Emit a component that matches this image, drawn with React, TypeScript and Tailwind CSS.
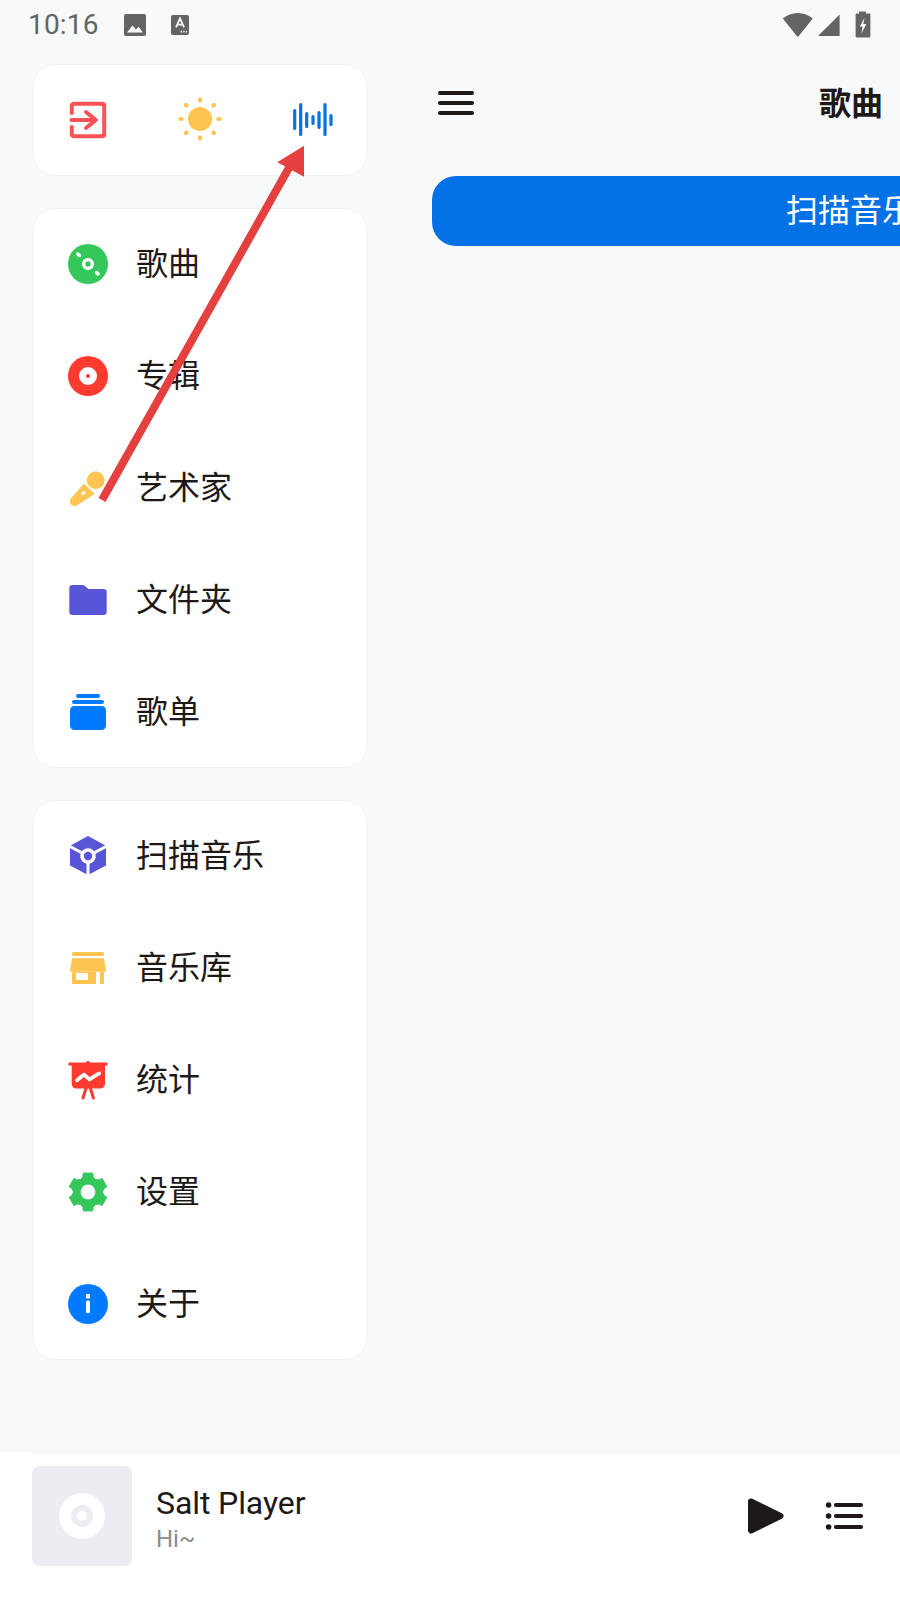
import React from "react";

const gearPoints = (() => {
  const pts: string[] = [];
  for (let i = 0; i < 6; i++) {
    const a = -90 + 60 * i;
    for (const [r, d] of [[14.6, -30], [15.8, -19], [19.5, -14], [19.5, 14], [15.8, 19]] as const) {
      const t = ((a + d) * Math.PI) / 180;
      pts.push(`${(20 + r * Math.cos(t)).toFixed(2)},${(20 + r * Math.sin(t)).toFixed(2)}`);
    }
  }
  return pts.join(" ");
})();

const Disc = () => (
  <svg width="40" height="40" viewBox="0 0 40 40">
    <circle cx="20" cy="20" r="20" fill="#34c759" />
    <circle cx="20" cy="20" r="4.4" fill="none" stroke="#fff" strokeWidth="3.4" />
    <path d="M9.9 9.9 11.4 11.4M28.6 28.6 30.1 30.1" stroke="#fff" strokeWidth="3.6" strokeLinecap="round" />
  </svg>
);
const Album = () => (
  <svg width="40" height="40" viewBox="0 0 40 40">
    <circle cx="20" cy="20" r="20" fill="#ff3b30" />
    <circle cx="20" cy="20" r="9" fill="#fff" />
    <circle cx="20" cy="20" r="2" fill="#ff3b30" />
  </svg>
);
const Mic = () => (
  <svg width="40" height="40" viewBox="0 0 40 40">
    <circle cx="27.7" cy="12.2" r="8.9" fill="#ffc552" />
    <path d="M15.8 15.6 26.6 26 8.6 37.6C6.8 38.7 5 38.4 3.4 36.8 1.6 35 1.2 33 2.4 31.2Z" fill="#ffc552" />
    <ellipse cx="15.4" cy="25.2" rx="2.4" ry="1.5" transform="rotate(-42 15.4 25.2)" fill="#fff" />
  </svg>
);
const Folder = () => (
  <svg width="40" height="40" viewBox="0 0 40 40">
    <path d="M4.3 5H14C15.5 5 16.5 5.5 17.5 6.4L20.5 9H35.7C37.4 9 38.7 10.3 38.7 12V32C38.7 33.7 37.4 35 35.7 35H4.3C2.6 35 1.3 33.7 1.3 32V8C1.3 6.3 2.6 5 4.3 5Z" fill="#5856d6" />
  </svg>
);
const Stack = () => (
  <svg width="40" height="40" viewBox="0 0 40 40" fill="#007aff">
    <rect x="8" y="2" width="24" height="4" rx="2" />
    <rect x="4" y="8" width="32" height="4" rx="2" />
    <rect x="2" y="14" width="36" height="24" rx="4.5" />
  </svg>
);
const Cube = () => (
  <svg width="40" height="40" viewBox="0 0 40 40">
    <path d="M20 0 38 9.8V29.4L20 39 2 29.4V9.8Z" fill="#5856d6" strokeLinejoin="round" />
    <path d="M1 10 20 20 39 10M20 20V40" stroke="#fff" strokeWidth="3" fill="none" />
    <circle cx="20" cy="20" r="6" fill="#5856d6" stroke="#fff" strokeWidth="3.6" />
  </svg>
);
const Shop = () => (
  <svg width="40" height="40" viewBox="0 0 40 40" fill="#ffc552">
    <rect x="4" y="4" width="32" height="4" rx="1.5" />
    <path d="M5 10.3H35C35.6 10.3 36 10.6 36.1 11.2L38 22C38.2 23 37.6 23.7 36.8 23.7H3.2C2.4 23.7 1.8 23 2 22L3.9 11.2C4 10.6 4.4 10.3 5 10.3Z" />
    <path d="M4 23.7H28V35C28 35.6 27.6 36 27 36H5C4.4 36 4 35.6 4 35Z" />
    <rect x="8" y="25" width="12" height="7" fill="#fff" />
    <path d="M32 23.7H36V35C36 35.6 35.6 36 35 36H33C32.4 36 32 35.6 32 35Z" />
  </svg>
);
const Stats = () => (
  <svg width="40" height="40" viewBox="0 0 40 40" fill="#ff3b30">
    <circle cx="20" cy="2.4" r="1.6" />
    <rect x="0.3" y="2.6" width="39.4" height="3" rx="1.4" />
    <path d="M3.7 4H37V24C37 26.2 35.2 28.4 33 28.4H7.7C5.5 28.4 3.7 26.2 3.7 24Z" />
    <path d="M18 28 15 38M22.4 28 25.4 38" stroke="#ff3b30" strokeWidth="3" strokeLinecap="round" />
    <path d="M9 20.2 16 14.6 21.4 19.4 31.2 13.4" fill="none" stroke="#fff" strokeWidth="3.8" strokeLinecap="round" strokeLinejoin="round" />
  </svg>
);
const Gear = () => (
  <svg width="40" height="40" viewBox="0 0 40 40">
    <polygon points={gearPoints} fill="#34c759" stroke="#34c759" strokeWidth="1" strokeLinejoin="round" />
    <circle cx="20" cy="20" r="7.4" fill="#fff" />
  </svg>
);
const Info = () => (
  <svg width="40" height="40" viewBox="0 0 40 40">
    <circle cx="20" cy="20" r="20" fill="#007aff" />
    <rect x="18" y="10" width="4" height="4.4" rx="1" fill="#fff" />
    <rect x="18" y="16.6" width="4" height="12.6" rx="1.6" fill="#fff" />
  </svg>
);

const Exit = () => (
  <svg width="40" height="40" viewBox="0 0 40 40" fill="none" stroke="#ff5252" strokeWidth="4" strokeLinecap="round" strokeLinejoin="round">
    <path d="M3.8 13V5.8C3.8 4.7 4.7 3.8 5.8 3.8H34.2C35.3 3.8 36.2 4.7 36.2 5.8V34.2C36.2 35.3 35.3 36.2 34.2 36.2H5.8C4.7 36.2 3.8 35.3 3.8 34.2V27" />
    <path d="M3.6 20H27.6M18 12 27.8 20 18 28" />
  </svg>
);
const Sun = () => (
  <svg width="48" height="48" viewBox="0 0 48 48" fill="#ffc552" stroke="#ffc552">
    <circle cx="24" cy="24" r="12" stroke="none" />
    <path d="M24 4.4V5.6M24 42.4V43.6M4.4 24H5.6M42.4 24H43.6M10 10 10.6 10.6M38 10 37.4 10.6M10 38 10.6 37.4M38 38 37.4 37.4" strokeWidth="4.2" strokeLinecap="round" />
  </svg>
);
const Wave = () => (
  <svg width="40" height="40" viewBox="0 0 40 40" stroke="#0471e6" strokeWidth="3.2" strokeLinecap="round">
    <path d="M1.7 10.5V28.5M7.7 4.5V34.5M13.7 13.5V26.5M20 16.5V23.5M26 12.5V27.5M32 4.5V34.5M38 15.5V24.5" />
  </svg>
);

const ImageIcon = () => (
  <svg width="24" height="24" viewBox="0 0 24 24">
    <rect x="1" y="1" width="22" height="22" rx="2" fill="#636564" />
    <path d="M4 19.4 9.5 12.6 13 16.4 15.6 13.8 20 19.4Z" fill="#f8f9fb" />
  </svg>
);
const FontIcon = () => (
  <svg width="20" height="22" viewBox="0 0 20 22">
    <rect x="1" y="1" width="18" height="20" rx="2" fill="#636564" />
    <path d="M6 13.4 10 4.4 14 13.4M7.4 10.6H12.6" stroke="#f8f9fb" strokeWidth="1.8" fill="none" />
    <path d="M10.6 17.6h1.4M13.2 17.6h1.4M15.8 17.6h1.4" stroke="#f8f9fb" strokeWidth="1.6" />
  </svg>
);

const navA = [
  { label: "歌曲", Icon: Disc },
  { label: "专辑", Icon: Album },
  { label: "艺术家", Icon: Mic },
  { label: "文件夹", Icon: Folder },
  { label: "歌单", Icon: Stack },
];
const navB = [
  { label: "扫描音乐", Icon: Cube },
  { label: "音乐库", Icon: Shop },
  { label: "统计", Icon: Stats },
  { label: "设置", Icon: Gear },
  { label: "关于", Icon: Info },
];

const NavCard = ({ items }: { items: { label: string; Icon: () => React.ReactElement }[] }) => (
  <div className="rounded-[24px] bg-white ring-1 ring-inset ring-[#eef0f2]">
    {items.map(({ label, Icon }) => (
      <div key={label} className="flex h-[112px] items-center gap-[28px] pl-[36px] text-[32px] leading-none">
        <Icon />
        <span>{label}</span>
      </div>
    ))}
  </div>
);

export default function App() {
  return (
    <div className="relative flex h-[1600px] w-[900px] flex-col overflow-hidden bg-[#f8f9fb] font-['Roboto','Noto_Sans_CJK_SC',sans-serif] text-[#1e1817]">
      <div className="flex h-[64px] flex-none items-center justify-between pb-[14px] pl-[28px] pr-[29px]">
        <div className="flex items-center text-[#636564]">
          <span className="w-[95px] text-[28px] leading-none tracking-[0.2px]">10:16</span>
          <ImageIcon />
          <span className="w-[23px]" />
          <FontIcon />
        </div>
        <div className="mb-[2px] flex items-center">
          <svg width="32" height="26" viewBox="0 0 32 26" fill="#636564">
            <path d="M0.8 7.6C4.8 4.2 10 2 15.8 2 21.6 2 26.8 4.2 30.8 7.6L16.6 25.2C16.2 25.8 15.4 25.8 15 25.2Z" />
          </svg>
          <svg className="ml-[3px]" width="24" height="26" viewBox="0 0 24 26" fill="#636564">
            <path d="M1 25 22.6 3.6V25Z" />
          </svg>
          <svg className="ml-[14px]" width="16" height="28" viewBox="0 0 16 28" fill="#636564">
            <path d="M4 1.5H11V3.5H14.6C15 3.5 15.4 3.9 15.4 4.4V26.6C15.4 27 15 27.4 14.6 27.4H1.4C1 27.4 0.6 27 0.6 26.6V4.4C0.6 3.9 1 3.5 1.4 3.5H4Z" />
            <path d="M9.4 8 4.8 16.6H7.6L6.4 23.6 11.4 14H8.4Z" fill="#f8f9fb" />
          </svg>
        </div>
      </div>

      <div className="flex min-h-0 flex-1">
        <div className="ml-[32px] flex w-[336px] flex-none flex-col gap-[32px]">
          <div className="grid h-[112px] grid-cols-3 rounded-[24px] bg-white ring-1 ring-inset ring-[#eef0f2]">
            <div className="flex items-center justify-center pr-[1px]"><Exit /></div>
            <div className="flex items-center justify-center pb-[2px]"><Sun /></div>
            <div className="flex items-center justify-center pl-[2px]"><Wave /></div>
          </div>
          <NavCard items={navA} />
          <NavCard items={navB} />
        </div>

        <div className="ml-[64px] w-[838px] flex-none">
          <div className="grid h-[80px] grid-cols-3 items-center">
            <svg className="mb-[2px] ml-[6px]" width="36" height="24" viewBox="0 0 36 24" stroke="#1e1817" strokeWidth="4" strokeLinecap="round">
              <path d="M2 2H34M2 12H34M2 22H34" />
            </svg>
            <div className="text-center text-[32px] font-bold leading-none">歌曲</div>
          </div>
          <div className="mt-[32px] flex h-[70px] items-center justify-center rounded-[24px] bg-[#0471e6] pr-[2px] text-[32px] text-white">
            扫描音乐
          </div>
        </div>
      </div>

      <div className="h-[148px] flex-none bg-white">
        <div className="ml-[32px] flex h-full items-center border-t border-[#eef0f2] pb-[21px]">
          <div className="flex h-[100px] w-[100px] flex-none items-center justify-center rounded-[8px] bg-[#ecedf3]">
            <svg width="46" height="46" viewBox="0 0 46 46">
              <circle cx="23" cy="23" r="23" fill="#fff" />
              <circle cx="23" cy="23" r="11" fill="#ecedf3" />
              <circle cx="23" cy="23" r="5" fill="#fff" />
            </svg>
          </div>
          <div className="ml-[24px] mt-[6px] flex flex-col">
            <span className="text-[32px] leading-[38px] tracking-[-0.1px]">Salt Player</span>
            <span className="mt-[1px] text-[24px] leading-[32px] text-[#8c8c8c]">Hi~</span>
          </div>
          <div className="ml-auto flex items-center gap-[38px] pr-[36px]">
            <svg width="40" height="40" viewBox="0 0 40 40" fill="#1e1817" stroke="#1e1817" strokeWidth="6" strokeLinejoin="round">
              <path d="M5 5.5 34.5 20 5 34.5Z" />
            </svg>
            <svg width="40" height="40" viewBox="0 0 40 40">
              <circle cx="4.6" cy="9" r="2.8" fill="#1e1817" />
              <circle cx="4.6" cy="20" r="2.8" fill="#1e1817" />
              <circle cx="4.6" cy="31" r="2.8" fill="#1e1817" />
              <path d="M12 9H37M12 20H37M12 31H37" stroke="#1e1817" strokeWidth="4.2" strokeLinecap="round" />
            </svg>
          </div>
        </div>
      </div>

      <svg className="pointer-events-none absolute inset-0" width="900" height="1600" viewBox="0 0 900 1600">
        <path d="M102 500 290 166" stroke="#e54040" strokeWidth="8" />
        <path d="M304 145.7 277.3 162.3 304 176.7Z" fill="#e54040" />
      </svg>
    </div>
  );
}
